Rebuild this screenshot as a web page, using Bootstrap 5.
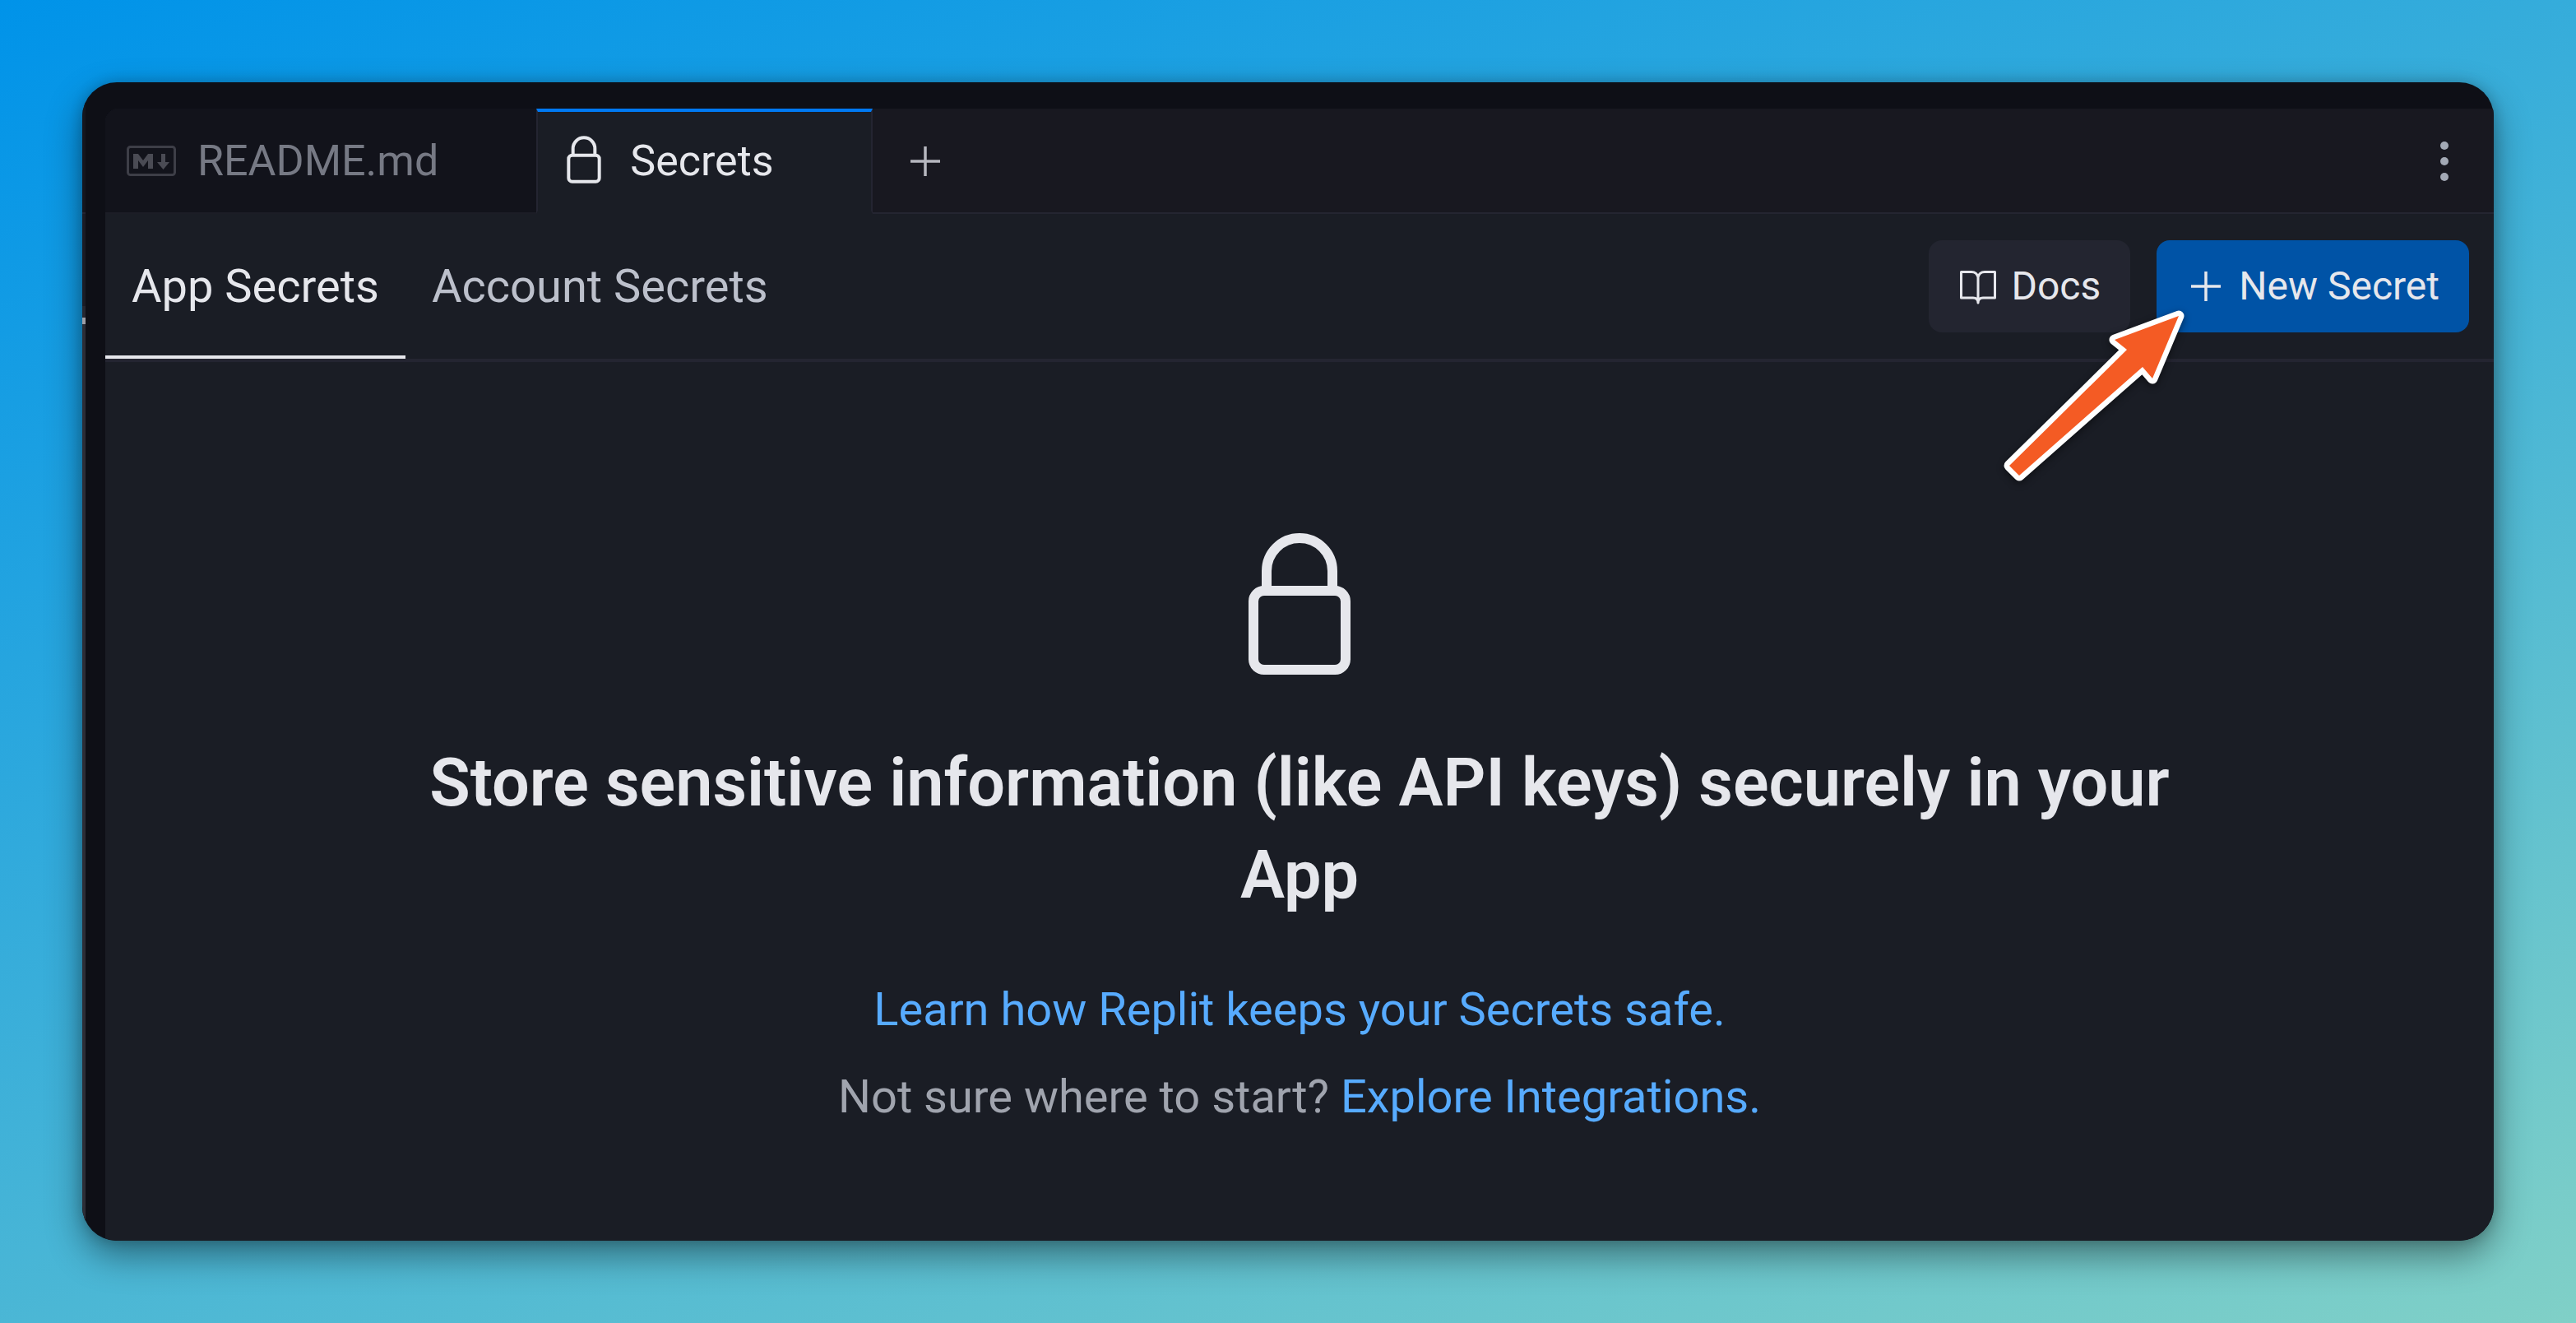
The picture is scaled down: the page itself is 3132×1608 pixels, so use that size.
<!DOCTYPE html>
<html lang="en" data-bs-theme="dark">
<head>
<meta charset="utf-8">
<meta name="viewport" content="width=device-width, initial-scale=1">
<title>Secrets</title>
<link href="https://cdn.jsdelivr.net/npm/bootstrap@5.3.0/dist/css/bootstrap.min.css" rel="stylesheet">
<style>
  :root {
    --root-bg: #0e0f16;
    --pane-bg: #1a1d25;
    --strip-bg: #181820;
    --dim-tab: #12131b;
    --line: #242531;
    --fg: #e6e7ec;
    --fg-dim: #bcc0cb;
    --fg-mute: #a0a4ae;
    --link: #57abff;
  }
  body {
    font-family: Roboto, "Liberation Sans", sans-serif;
    color: var(--fg);
    padding: 100px;
    background: linear-gradient(160deg, #0093e9 0%, #80d0c7 100%);
  }
  svg { flex: none; }
  .app-window {
    background: var(--root-bg);
    border-radius: 42px;
    box-shadow: 0 18px 44px rgba(0, 0, 0, .42), 0 0 16px rgba(0, 0, 0, .2);
  }
  /* edge of the neighbouring pane */
  .side-edge { width: 4px; padding-top: 40px; background: #15161e; }
  .edge-top { height: 120px; border-bottom: 2px solid var(--line); }
  .edge-mid { height: 112px; background: #1b1c25; }
  .edge-row { height: 14px; background: #262730; }
  .edge-mark { height: 8px; background: #9d9ea6; }
  .edge-rest { background: #2c2d36; }

  .pane { margin: 32px 0 0 24px; background: var(--pane-bg); border-top-left-radius: 16px; }
  .tab-strip { height: 128px; background: var(--strip-bg); }
  .file-tab {
    font-size: 52px;
    line-height: 60px;
    gap: 24px;
    padding: 2px 119px 0 24px;
    border: 0;
    background: var(--dim-tab);
    color: #767984;
    border-bottom: 2px solid #1c1d26;
  }
  .file-tab.current {
    padding-top: 0;
    background: var(--pane-bg);
    color: var(--fg);
    border: 2px solid var(--line);
    border-top: 4px solid #0079f2;
    border-bottom: 4px solid var(--pane-bg);
  }
  .strip-rest { border-bottom: 2px solid var(--line); padding: 2px 28px 0 40px; }
  .icon-btn { color: #b6b7bf; }

  .sub-bar { border-bottom: 4px solid var(--line); padding-right: 30px; }
  .sub-tab {
    font-size: 56px;
    line-height: 64px;
    padding: 56px 32px 52px;
    color: var(--fg-dim);
    border-bottom: 4px solid transparent;
  }
  .sub-tab.active { color: var(--fg); border-bottom-color: var(--fg); }
  .act {
    --bs-btn-color: var(--fg);
    --bs-btn-bg: #232530;
    --bs-btn-border-width: 0;
    --bs-btn-padding-x: 36px;
    --bs-btn-padding-y: 28px;
    --bs-btn-font-size: 48px;
    --bs-btn-line-height: 56px;
    --bs-btn-border-radius: 16px;
    --bs-btn-font-weight: 400;
  }
  .act-blue { --bs-btn-bg: #0053a6; }
  .actions { gap: 32px; }
  .pointer { left: -191px; top: 80px; filter: drop-shadow(0 3px 5px rgba(0, 0, 0, .45)); pointer-events: none; }

  .empty { padding: 204px 32px 120px; }
  .empty-title {
    font-size: 81px;
    line-height: 112px;
    font-weight: 600;
    color: var(--fg);
    max-width: 2240px;
    margin: 60px 0 66px;
  }
  .empty-text { font-size: 56px; line-height: 82px; gap: 24px; color: var(--fg-mute); }
  .empty-text a { color: var(--link); }
</style>
<script src="https://cdn.jsdelivr.net/npm/bootstrap@5.3.0/dist/js/bootstrap.bundle.min.js"></script>
</head>
<body class="min-vh-100 d-flex">

<svg class="d-none" aria-hidden="true">
  <symbol id="i-lock" viewBox="0 0 24 24" fill="none" stroke="currentColor" stroke-width="1.5">
    <path d="M7 9.250V6.250a5 5 0 0 1 10 0v3"/>
    <rect x="5" y="9.250" width="14" height="12" rx="1.600"/>
  </symbol>
  <symbol id="i-plus" viewBox="0 0 24 24" fill="none" stroke="currentColor" stroke-width="1.75">
    <path d="M12 3v18M3 12h18"/>
  </symbol>
</svg>

<div class="app-window d-flex flex-grow-1 overflow-hidden">
  <div class="side-edge d-flex flex-column">
    <div class="edge-top"></div>
    <div class="edge-mid"></div>
    <div class="edge-row"></div>
    <div class="edge-mark"></div>
    <div class="edge-rest flex-grow-1"></div>
  </div>

  <main class="pane flex-grow-1 d-flex flex-column overflow-hidden">
    <div class="tab-strip d-flex align-items-stretch">
      <button type="button" class="file-tab d-flex align-items-center">
        <svg width="64" height="64" viewBox="0 0 64 64" aria-hidden="true">
          <rect x="3.5" y="14.5" width="57" height="34" rx="3" fill="none" stroke="#3d3e47" stroke-width="3"/>
          <path fill="#4a4b54" d="M10 41V23h6l6 8 6-8h6v18h-6V31l-6 8-6-8v10zM44 23h5v10h5l-7.500 9-7.500-9h5z"/>
        </svg>
        README.md
      </button>
      <button type="button" class="file-tab current d-flex align-items-center">
        <svg width="64" height="64" aria-hidden="true"><use href="#i-lock"/></svg>
        Secrets
      </button>
      <div class="strip-rest flex-grow-1 d-flex align-items-center justify-content-between">
        <button type="button" class="icon-btn btn p-0 border-0 d-flex" aria-label="New tab">
          <svg width="48" height="48" aria-hidden="true"><use href="#i-plus"/></svg>
        </button>
        <button type="button" class="icon-btn btn p-0 border-0 d-flex" aria-label="More options">
          <svg width="64" height="64" viewBox="0 0 64 64" fill="#a3a9b5" aria-hidden="true">
            <circle cx="32" cy="13" r="5"/><circle cx="32" cy="32" r="5"/><circle cx="32" cy="51" r="5"/>
          </svg>
        </button>
      </div>
    </div>

    <div class="sub-bar d-flex justify-content-between align-items-center">
      <nav class="nav" aria-label="Secret scopes">
        <a class="sub-tab active text-decoration-none" aria-current="page" href="#">App Secrets</a>
        <a class="sub-tab text-decoration-none" href="#">Account Secrets</a>
      </nav>
      <div class="actions d-flex">
        <button type="button" class="act btn d-flex align-items-center gap-3">
          <svg width="48" height="48" viewBox="0 0 24 24" fill="none" stroke="currentColor" stroke-width="1.5" stroke-linejoin="round" aria-hidden="true">
            <path d="M12 6.500C11.500 4.500 10.500 3.300 8 3.300H1.750V19H9c1.800 0 3 .8 3 3 0-2.200 1.200-3 3-3h7.250V3.300H16c-2.500 0-3.500 1.200-4 3.200zV21"/>
          </svg>
          Docs
        </button>
        <div class="position-relative">
          <button type="button" class="act act-blue btn d-flex align-items-center gap-3">
            <svg width="48" height="48" aria-hidden="true"><use href="#i-plus"/></svg>
            New Secret
          </button>
          <svg class="pointer position-absolute" width="230" height="218" viewBox="0 0 230 218" aria-hidden="true">
            <path d="M218 12L140 41 155 53 12 194 24 206 174 74 186 88z" fill="#f45b24" stroke="#fff" stroke-width="13" stroke-linejoin="round" paint-order="stroke"/>
          </svg>
        </div>
      </div>
    </div>

    <section class="empty d-flex flex-column align-items-center text-center">
      <svg width="192" height="192" aria-hidden="true"><use href="#i-lock"/></svg>
      <h1 class="empty-title">Store sensitive information (like API keys) securely in your App</h1>
      <div class="empty-text d-flex flex-column">
        <div><a class="text-decoration-none" href="#">Learn how Replit keeps your Secrets safe.</a></div>
        <div>Not sure where to start? <a class="text-decoration-none" href="#">Explore Integrations.</a></div>
      </div>
    </section>
  </main>
</div>
</body>
</html>
